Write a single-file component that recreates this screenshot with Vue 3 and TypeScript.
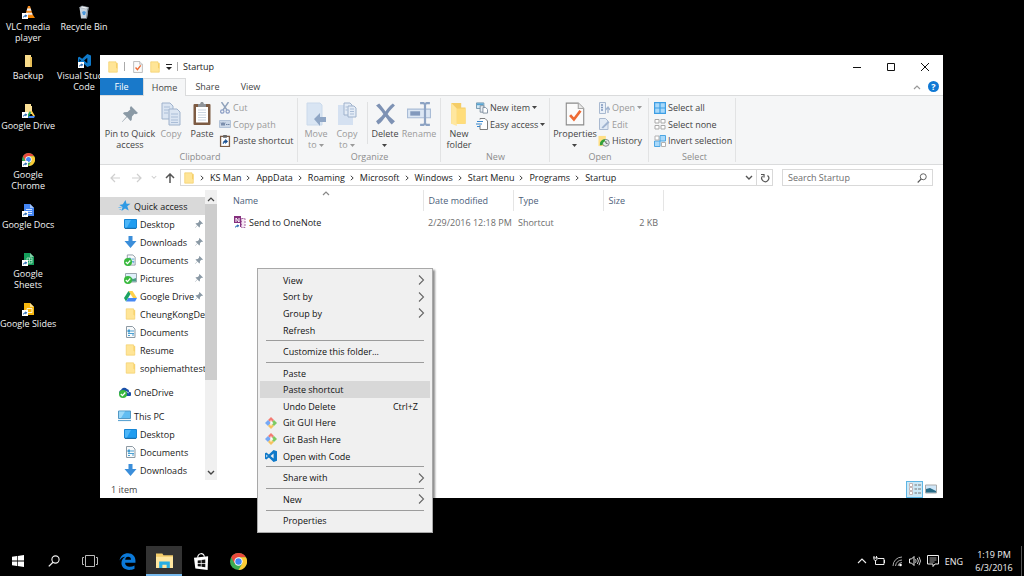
<script setup lang="ts">
interface DesktopIcon { icon: string; label: string[] }
interface NavItem { icon: string; label: string; top?: boolean; pinned?: boolean; gap?: boolean; active?: boolean }
interface MenuItem { label?: string; sep?: boolean; sub?: boolean; key?: string; icon?: string; active?: boolean }

const leftIcons: DesktopIcon[] = [
  { icon: 'vlc', label: ['VLC media', 'player'] },
  { icon: 'backup', label: ['Backup'] },
  { icon: 'gdrive-folder', label: ['Google Drive'] },
  { icon: 'chrome-link', label: ['Google', 'Chrome'] },
  { icon: 'gdocs', label: ['Google Docs'] },
  { icon: 'gsheets', label: ['Google', 'Sheets'] },
  { icon: 'gslides', label: ['Google Slides'] },
]
const rightIcons: DesktopIcon[] = [
  { icon: 'bin', label: ['Recycle Bin'] },
  { icon: 'code-link', label: ['Visual Studio', 'Code'] },
]
const crumbs: string[] = ['KS Man', 'AppData', 'Roaming', 'Microsoft', 'Windows', 'Start Menu', 'Programs', 'Startup']
const nav: NavItem[] = [
  { icon: 'star', label: 'Quick access', top: true, active: true },
  { icon: 'desktop', label: 'Desktop', pinned: true },
  { icon: 'down', label: 'Downloads', pinned: true },
  { icon: 'doc-ok', label: 'Documents', pinned: true },
  { icon: 'pic-ok', label: 'Pictures', pinned: true },
  { icon: 'gdrive', label: 'Google Drive', pinned: true },
  { icon: 'folder', label: 'CheungKongDef' },
  { icon: 'doc', label: 'Documents' },
  { icon: 'folder', label: 'Resume' },
  { icon: 'folder', label: 'sophiemathtest' },
  { icon: 'onedrive', label: 'OneDrive', top: true, gap: true },
  { icon: 'pc', label: 'This PC', top: true, gap: true },
  { icon: 'desktop', label: 'Desktop' },
  { icon: 'doc', label: 'Documents' },
  { icon: 'down', label: 'Downloads' },
]
const menu: MenuItem[] = [
  { label: 'View', sub: true },
  { label: 'Sort by', sub: true },
  { label: 'Group by', sub: true },
  { label: 'Refresh' },
  { sep: true },
  { label: 'Customize this folder...' },
  { sep: true },
  { label: 'Paste' },
  { label: 'Paste shortcut', active: true },
  { label: 'Undo Delete', key: 'Ctrl+Z' },
  { label: 'Git GUI Here', icon: 'git' },
  { label: 'Git Bash Here', icon: 'git' },
  { label: 'Open with Code', icon: 'code' },
  { sep: true },
  { label: 'Share with', sub: true },
  { sep: true },
  { label: 'New', sub: true },
  { sep: true },
  { label: 'Properties' },
]
</script>

<template>
  <div class="screen">
    <svg class="sprite" width="0" height="0" aria-hidden="true">
      <symbol id="folder" viewBox="0 0 12 14"><path d="M1 1h8.5v1.5H11V13H1z" fill="#ffe597" stroke="#f3cf6a" stroke-width=".8" /><path d="M9.5 2.5V8L11 9V2.5z" fill="#f6cf67" /></symbol>
      <symbol id="arrow-badge" viewBox="0 0 6 6"><path d="M0 0h6v6H0z" fill="#fff" /><path d="M1.2 5C1 3 2 2.2 3.4 2.2V1.2L5.3 2.8 3.4 4.4V3.4C2.4 3.4 1.8 4 1.2 5z" fill="#1e62ad" /></symbol>
      <symbol id="vlc" viewBox="0 0 14 14"><path d="M3 10h9l2 3H2z" fill="#f38400" /><path d="M7 1h2l3 10H4z" fill="#f58a1c" /><path d="M6.3 3.5h3.4l.7 2.3H5.6zM5 7.7h6l.6 2H4.4z" fill="#eee" /><use href="#arrow-badge" x="1" y="8" width="6" height="6" /></symbol>
      <symbol id="backup" viewBox="0 0 14 14"><path d="M4 1h6v2h1v10H4z" fill="#f9dc8b" /><path d="M9 3h2v10H9z" fill="#e9bf58" /></symbol>
      <symbol id="gdrive-folder" viewBox="0 0 14 14"><path d="M4 0h6v2h1v8H4z" fill="#fbe096" /><path d="M9 7h2l3 5h-2z" fill="#ffd04b" /><path d="M9 7L6 12l1 2 3-5z" fill="#1ca261" /><path d="M8 12h6l-1 2H7z" fill="#4688f4" /><use href="#arrow-badge" x="1" y="8" width="6" height="6" /></symbol>
      <symbol id="chrome" viewBox="0 0 16 16"><circle cx="8" cy="8" r="8" fill="#3cab54" /><path d="M1.1 4A8 8 0 0 1 15 4H8L4.5 10z" fill="#e8493c" /><path d="M15 4A8 8 0 0 1 8 16l3.5-6L8 4z" fill="#fccb35" /><circle cx="8" cy="8" r="3.9" fill="#fff" /><circle cx="8" cy="8" r="3" fill="#4286f5" /></symbol>
      <symbol id="chrome-link" viewBox="0 0 14 14"><use href="#chrome" x="1" y="0" width="13" height="13" /><use href="#arrow-badge" x="1" y="8" width="6" height="6" /></symbol>
      <symbol id="gdocs" viewBox="0 0 14 14"><path d="M3 1h6l4 4v8H3z" fill="#4486f4" /><path d="M9 1l4 4H9z" fill="#a3c4fb" /><path d="M5 6.5h6M5 8.5h6M7 10.500h4" stroke="#dfeafd" stroke-width=".9" /><use href="#arrow-badge" x="1" y="8" width="6" height="6" /></symbol>
      <symbol id="gsheets" viewBox="0 0 14 14"><path d="M3 1h6l4 4v8H3z" fill="#149e5b" /><path d="M9 1l4 4H9z" fill="#84cda7" /><path d="M6 6h5v5H6zM6 8.500h5M8.500 6v5" fill="none" stroke="#b9e4cc" stroke-width=".8" /><use href="#arrow-badge" x="1" y="8" width="6" height="6" /></symbol>
      <symbol id="gslides" viewBox="0 0 14 14"><path d="M3 1h6l4 4v8H3z" fill="#f7b60c" /><path d="M9 1l4 4H9z" fill="#fde08d" /><path d="M6 6.500h5v4H6z" fill="none" stroke="#fff3cf" /><use href="#arrow-badge" x="1" y="8" width="6" height="6" /></symbol>
      <symbol id="bin" viewBox="0 0 14 14"><path d="M2.500 2.500L4 13.500h6l1.500-11z" fill="#c9d3dc" /><path d="M2.500 2.500L5 1l6.500 1.500L9 4z" fill="#f1f4f7" stroke="#99a6b2" stroke-width=".6" /><path d="M5 7l2-1 2 1-1 3H6z" fill="#4a98dc" /><path d="M10 4l-1 9h1l1.500-10z" fill="#7e8b96" /></symbol>
      <symbol id="code" viewBox="0 0 14 14"><path d="M10 0l4 1.500v11L10 14 4.500 8.800 1.500 11 0 10.200V3.800L1.500 3l3 2.200zM10 4L6.500 7 10 10zM1.500 5.300v3.400L3.200 7z" fill="#0f79c9" fill-rule="evenodd" /></symbol>
      <symbol id="code-link" viewBox="0 0 14 14"><use href="#code" x="1" y="0" width="13" height="13" /><use href="#arrow-badge" x="1" y="8" width="6" height="6" /></symbol>
      <symbol id="prop" viewBox="0 0 18 22"><path d="M1 1h11l5 5v15H1z" fill="#fbfbfb" stroke="#8b8b8b" /><path d="M12 1v5h5" fill="#e8e8e8" stroke="#a5a5a5" /><path d="M4.500 12l3.500 4 6-8" fill="none" stroke="#ee6a33" stroke-width="2.500" /></symbol>
      <symbol id="pin" viewBox="0 0 16 16"><path d="M9 0l7 7-2 1.200-1.500-.5L10 10.500 9.700 14 8.500 15 5 11 .3 16 0 15.700 4.500 10.500 1 7.500 2 6.300l3.500-.2L8.300 3.500 7.800 2z" fill="#8a99a5" /></symbol>
      <symbol id="copy" viewBox="0 0 20 24"><g fill="#dbe5f2" stroke="#9fb2cc"><path d="M1 1h8l3 3v13H1z" /><path d="M8 7h8l3 3v13H8z" /></g><path d="M3 5h6M3 8h5M3 11h4M10 12h7M10 15h7M10 18h7M10 20.500h7" stroke="#aabdd7" /></symbol>
      <symbol id="paste" viewBox="0 0 18 24"><rect x=".5" y="2" width="17" height="21" rx="1" fill="#7d5b43" /><path d="M3 5h12v15.500H3z" fill="#fff" /><path d="M5 8h8M5 10.500h8M5 13h8M5 15.500h8M5 18h8" stroke="#cbd6e2" /><path d="M5 2h2l1-2h2l1 2h2v3H5z" fill="#8f9499" /></symbol>
      <symbol id="cut" viewBox="0 0 10 12"><path d="M1.500 0L7 8M8.500 0L3 8" stroke="#90a2bb" stroke-width="1.400" /><circle cx="2.300" cy="9.500" r="1.700" fill="none" stroke="#8c9ec4" stroke-width="1.200" /><circle cx="7.700" cy="9.500" r="1.700" fill="none" stroke="#8c9ec4" stroke-width="1.200" /></symbol>
      <symbol id="path" viewBox="0 0 12 8"><path d="M.5.5h11v7H.5z" fill="#ccd8e8" stroke="#b3c3d8" /><path d="M2 2.500l1 3 1-3 1 3 1-3M7 4.500h1.500M9 4.500h1.500" fill="none" stroke="#657a9c" stroke-width=".9" /></symbol>
      <symbol id="paste-link" viewBox="0 0 11 13"><rect x=".7" y="1.500" width="9.600" height="11" fill="#fff" stroke="#795a44" stroke-width="1.400" /><path d="M3.500 0h4v3h-4z" fill="#666" /><path d="M3.500 9.500C3.500 7 4.500 6 6 6V4.700L8.500 7 6 9.200V7.800c-1 0-1.500.7-2.500 1.700z" fill="#174f91" stroke="#174f91" stroke-width=".6" /></symbol>
      <symbol id="move" viewBox="0 0 20 24"><path d="M1 1h13l2 2v20H1z" fill="#d9e5f3" stroke="#cbdaeb" /><path d="M8 17l6-6v4h6v5h-6v4z" fill="#8fa6c5" /></symbol>
      <symbol id="copyto" viewBox="0 0 20 24"><path d="M1 3h13l2 2v18H1z" fill="#d5e1f1" /><g fill="#e4ecf6" stroke="#9fb2cc"><path d="M7 1h6l2 2v10H7z" /><path d="M11 4h6l2 2v9h-8z" /></g><path d="M13 7h4M13 9.500h4M13 12h4M8.500 5h2M8.500 8h2" stroke="#aabdd7" /></symbol>
      <symbol id="delete" viewBox="0 0 20 20"><path d="M1 2l3-2c2 2 4 5 6 7.500C12 5 14 2 17 0l2 2c-2 2-5 5-7 8 2 3 5 5 7 7l-3 3c-2-2-4-5-6-7.500C8 15 6 18 3 20l-2-3c2-2 5-4 7-7C6 7 3 4 1 2z" fill="#7e92b4" /></symbol>
      <symbol id="rename" viewBox="0 0 22 22"><path d="M.5 6.500h21v8H.5z" fill="#dce7f4" stroke="#a9bcd6" /><path d="M3 8.500h9v4H3z" fill="#8299bd" /><path d="M12 1h3l1.500 1L18 1h3M12 21h3l1.500-1L18 21h3M16.500 2v18" fill="none" stroke="#8da3c3" stroke-width="2" /></symbol>
      <symbol id="newfolder" viewBox="0 0 16 22"><path d="M1 1h9v4h4v15H1z" fill="#f5cd67" /><path d="M1 1l5 5v16l-5-2z" fill="#ffe79f" /><path d="M6 6h8v14H6z" fill="#ffdd7b" /></symbol>
      <symbol id="newitem" viewBox="0 0 13 12"><path d="M.5.500h8v6h-8z" fill="#d6eaf6" stroke="#6b93ab" /><path d="M1 1h7v2H1z" fill="#55a4d3" /><path d="M4.500 3.500h4v7h-4z" fill="#e9eef3" stroke="#7f8e9e" /><path d="M7.500 5.500h3l2 2v4h-5z" fill="#fff" stroke="#7f8e9e" /></symbol>
      <symbol id="easy" viewBox="0 0 12 12"><path d="M4 1.500V.5h5l2.500 2.500v8.500H4V7" fill="#fff" stroke="#7d7d7d" /><path d="M1 3.500h6M0 6h6M1 8.500h3" stroke="#3886cc" stroke-width="1.200" /></symbol>
      <symbol id="open" viewBox="0 0 12 12"><path d="M1.500.500h6v11h-6z" fill="#eaf0f8" stroke="#a9b9d0" /><path d="M3 3h2M3 5.500h2M3 8h2" stroke="#7f97bd" stroke-width="1.400" /><path d="M10 5v6M7.500 8L10 5l2 3" fill="none" stroke="#a1b4cf" stroke-width="1.300" /></symbol>
      <symbol id="edit" viewBox="0 0 12 12"><path d="M1.500.500h6l2.500 2.500v8.500H1.500z" fill="#e1eaf5" stroke="#a9b9d0" /><path d="M3.500 9.500L10 3l1.500 1.500-6.500 6z" fill="#9fb3d0" /></symbol>
      <symbol id="history" viewBox="0 0 13 12"><path d="M.5.500h8v11h-8z" fill="#ffdf86" /><circle cx="8.500" cy="8" r="3.700" fill="#e7ecec" stroke="#79868d" /><path d="M8.500 6v2.300L10.500 9" fill="none" stroke="#555" /><path d="M2 10C2 6 4 4 8 4L7 7C5.500 7 5 8 5 10l-2 1z" fill="#32a13a" /></symbol>
      <symbol id="selall" viewBox="0 0 12 12"><path d="M0 0h12v12H0z" fill="#3d9ee4" /><path d="M1.200 1.200h4.200v4.200H1.200zM6.600 1.200h4.200v4.200H6.600zM1.200 6.600h4.200v4.200H1.200zM6.600 6.600h4.200v4.200H6.600z" fill="#a9d9fa" /></symbol>
      <symbol id="selnone" viewBox="0 0 12 12"><path d="M1 1.500h4v3.500H1zM7 1.500h4v3.500H7zM1 7.500h4V11H1zM7 7.500h4V11H7z" fill="#fff" stroke="#a9a9a9" /></symbol>
      <symbol id="selinv" viewBox="0 0 12 12"><path d="M6 .5h5.500V6H6zM.5 6H6v5.500H.5z" fill="#a9d9fa" stroke="#4da6e3" /><path d="M1 1h4v4H1zM7.500 7.500h4v4h-4z" fill="#fff" stroke="#b1b1b1" /></symbol>
      <symbol id="star" viewBox="0 0 12 12"><path d="M7 0l1 3.700 4 .1-3.200 2.500 1.400 4.200L6.500 8.500 3 11l1-4L.8 5l3.500-.7z" fill="#2f9ae4" /><path d="M0 7.500h3M1 9.500h2" stroke="#77bdee" /></symbol>
      <symbol id="desktop" viewBox="0 0 13 12"><path d="M.5 1.500h12v8.500H.5z" fill="#1f9cf0" stroke="#1685d4" /><path d="M1 2h6L3 9.500H1z" fill="#4db6f8" /><path d="M1 10h11v1H1z" fill="#1d6fa9" /></symbol>
      <symbol id="down" viewBox="0 0 13 12"><path d="M4.500 0h4v5H12.500l-6 7-6-7h4z" fill="#3b8eda" /></symbol>
      <symbol id="doc" viewBox="0 0 13 12"><path d="M2.500.500h6L11 3v8.500H2.500z" fill="#f8fafb" stroke="#8e9aa4" /><path d="M4 4h2v2H4zM7 5h3M4 7.500h6M4 9.500h2M8 9h2" fill="#3b95cf" stroke="#4b9fd1" /></symbol>
      <symbol id="okay" viewBox="0 0 8 8"><circle cx="4" cy="4" r="4" fill="#39b93e" /><path d="M1.800 4l1.700 1.700L6.300 2.500" fill="none" stroke="#fff" stroke-width="1.200" /></symbol>
      <symbol id="doc-ok" viewBox="0 0 13 12"><use href="#doc" x="1" width="12" height="12" /><use href="#okay" x="0" y="4" width="8" height="8" /></symbol>
      <symbol id="pic-ok" viewBox="0 0 13 12"><path d="M1.500 1.500h11v8.500h-11z" fill="#dff0fb" stroke="#9ba7b0" /><path d="M3 8l3-3 3 2 3-1v3.500H3z" fill="#4a9d84" /><use href="#okay" x="0" y="4" width="8" height="8" /></symbol>
      <symbol id="gdrive" viewBox="0 0 13 12"><path d="M4.500 1h4l4.500 7H9z" fill="#ffd04b" /><path d="M4.500 1L0 8l2 3.500L6.500 4z" fill="#1ca261" /><path d="M4.200 8H13l-2 3.500H2z" fill="#4688f4" /></symbol>
      <symbol id="onedrive" viewBox="0 0 13 12"><path d="M2 9a3 3 0 0 1 1-5 3.500 3.500 0 0 1 6-1 2.500 2.500 0 0 1 2 3 2 2 0 0 1 1 4H7z" fill="#1a50a8" /><path d="M6 10V7.500L8 5.500l3 1.500" fill="none" stroke="#fff" stroke-width=".7" /><use href="#okay" x="1" y="4" width="8" height="8" /></symbol>
      <symbol id="pc" viewBox="0 0 13 12"><path d="M.500 1h12v7.500H.500z" fill="#62bdf2" stroke="#5398c4" /><path d="M1 1.500h6L3 8H1z" fill="#9cd9f9" /><path d="M0 10.500h13" stroke="#5fa5d2" stroke-width="1.200" /></symbol>
      <symbol id="onenote" viewBox="0 0 13 13"><path d="M1 0h7v11H1z" fill="#85307e" /><path d="M8.500 2.500h3.500v9H8.500z" fill="#f6e8f4" stroke="#a765a1" stroke-dasharray="2 1" /><path d="M3 6V2l3 4V2" fill="none" stroke="#fff" /><use href="#arrow-badge" x="1" y="7" width="6" height="6" /></symbol>
      <symbol id="git" viewBox="0 0 12 12"><path d="M6 0l3 3-3 3-3-3z" fill="#f37a72" /><path d="M0 6l3-3 3 3-3 3z" fill="#76a9f5" /><path d="M6 12l3-3-3-3-3 3z" fill="#f6c35f" /><path d="M12 6L9 3 6 6l3 3z" fill="#7dcb62" /><path d="M6 3.500v5M6 5l2 1.500" stroke="#fff" stroke-width="1.300" /></symbol>
      <symbol id="chev" viewBox="0 0 8 12"><path d="M1 1.500L5.500 6 1 10.500" fill="none" stroke="#666" stroke-width="1.100" /></symbol>
      <symbol id="caret-up" viewBox="0 0 8 6"><path d="M1 5l3-3 3 3" fill="none" stroke="currentColor" stroke-width="1.200" /></symbol>
      <symbol id="caret-down" viewBox="0 0 8 6"><path d="M1 1l3 3 3-3" fill="none" stroke="currentColor" stroke-width="1.400" /></symbol>
      <symbol id="tri" viewBox="0 0 5 3"><path d="M0 0h5L2.500 3z" fill="currentColor" /></symbol>
      <symbol id="arrow" viewBox="0 0 10 10"><path d="M5 1L1 5l4 4M1 5h9" fill="none" stroke="currentColor" stroke-width="1.200" /></symbol>
      <symbol id="up" viewBox="0 0 10 10"><path d="M1 5l4-4 4 4M5 1v9" fill="none" stroke="currentColor" stroke-width="1.500" /></symbol>
      <symbol id="refresh" viewBox="0 0 10 10"><path d="M7.500 2.500A3.500 3.500 0 1 1 2.500 3" fill="none" stroke="#555" stroke-width="1.200" /><path d="M1 1.500h3v3" fill="none" stroke="#555" stroke-width="1.200" /></symbol>
      <symbol id="glass" viewBox="0 0 12 12"><circle cx="7.500" cy="4.500" r="3.600" fill="none" stroke="currentColor" stroke-width="1.100" /><path d="M5 7.200L.800 11.400" stroke="currentColor" stroke-width="1.300" /></symbol>
    </svg>

    <main class="desktop">
      <ul class="shortcuts">
        <li v-for="d in leftIcons" :key="d.icon">
          <svg class="i14"><use :href="'#' + d.icon" /></svg>
          <span v-for="l in d.label" :key="l">{{ l }}</span>
        </li>
      </ul>
      <ul class="shortcuts">
        <li v-for="d in rightIcons" :key="d.icon">
          <svg class="i14"><use :href="'#' + d.icon" /></svg>
          <span v-for="l in d.label" :key="l">{{ l }}</span>
        </li>
      </ul>
    </main>

    <section class="window">
      <header class="titlebar">
        <svg class="i12"><use href="#folder" /></svg><i class="bar spaced" />
        <svg class="i12"><use href="#prop" /></svg>
        <svg class="i12"><use href="#folder" /></svg>
        <svg class="qat" viewBox="0 0 6 6"><path d="M0 .5h6" stroke="#222" /><path d="M0 3h6L3 6z" fill="#222" /></svg>
        <i class="bar" />
        <h1>Startup</h1>
        <div class="controls">
          <button aria-label="Minimize"><svg viewBox="0 0 10 10"><path d="M1 5.500h8" stroke="#111" /></svg></button>
          <button aria-label="Maximize"><svg viewBox="0 0 10 10"><path d="M1.500 1.500h7v7h-7z" fill="none" stroke="#111" /></svg></button>
          <button aria-label="Close"><svg viewBox="0 0 10 10"><path d="M1 1l8 8M9 1L1 9" stroke="#111" /></svg></button>
        </div>
      </header>
      <nav class="tabs">
        <button class="file">File</button>
        <button class="on">Home</button>
        <button>Share</button>
        <button>View</button>
        <div class="tabs-end">
          <svg class="i8"><use href="#caret-up" /></svg>
          <button class="help" aria-label="Help">?</button>
        </div>
      </nav>

      <div class="ribbon">
        <div class="group clipboard">
          <div class="tools">
            <button class="big w54"><svg class="pin"><use href="#pin" /></svg><span>Pin to Quick<br>access</span></button>
            <button class="big w28 off"><svg><use href="#copy" /></svg><span>Copy</span></button>
            <button class="big w34"><svg><use href="#paste" /></svg><span>Paste</span></button>
            <div class="small">
              <button class="off"><svg><use href="#cut" /></svg>Cut</button>
              <button class="off"><svg><use href="#path" /></svg>Copy path</button>
              <button><svg><use href="#paste-link" /></svg>Paste shortcut</button>
            </div>
          </div>
          <h2>Clipboard</h2>
        </div>
        <div class="group organize">
          <div class="tools">
            <button class="big w34 off"><svg><use href="#move" /></svg><span>Move<br>to <svg class="tri"><use href="#tri" /></svg></span></button>
            <button class="big w28 off"><svg><use href="#copyto" /></svg><span>Copy<br>to <svg class="tri"><use href="#tri" /></svg></span></button>
            <i class="rule" />
            <button class="big w34"><svg class="cross"><use href="#delete" /></svg><span>Delete<br><svg class="tri"><use href="#tri" /></svg></span></button>
            <button class="big w34 off"><svg><use href="#rename" /></svg><span>Rename</span></button>
          </div>
          <h2>Organize</h2>
        </div>
        <div class="group new">
          <div class="tools">
            <button class="big w34"><svg><use href="#newfolder" /></svg><span>New<br>folder</span></button>
            <div class="small">
              <button><svg><use href="#newitem" /></svg>New item<svg class="tri"><use href="#tri" /></svg></button>
              <button><svg><use href="#easy" /></svg>Easy access<svg class="tri"><use href="#tri" /></svg></button>
            </div>
          </div>
          <h2>New</h2>
        </div>
        <div class="group opening">
          <div class="tools">
            <button class="big w44"><svg><use href="#prop" /></svg><span>Properties<br><svg class="tri"><use href="#tri" /></svg></span></button>
            <div class="small">
              <button class="off"><svg><use href="#open" /></svg>Open<svg class="tri"><use href="#tri" /></svg></button>
              <button class="off"><svg><use href="#edit" /></svg>Edit</button>
              <button><svg><use href="#history" /></svg>History</button>
            </div>
          </div>
          <h2>Open</h2>
        </div>
        <div class="group select">
          <div class="tools">
            <div class="small">
              <button><svg><use href="#selall" /></svg>Select all</button>
              <button><svg><use href="#selnone" /></svg>Select none</button>
              <button><svg><use href="#selinv" /></svg>Invert selection</button>
            </div>
          </div>
          <h2>Select</h2>
        </div>
      </div>

      <div class="address">
        <button class="nav dim" aria-label="Back"><svg class="i10"><use href="#arrow" /></svg></button>
        <button class="nav dim" aria-label="Forward"><svg class="i10 flip"><use href="#arrow" /></svg></button>
        <button class="recent dim" aria-label="Recent"><svg class="i6"><use href="#caret-down" /></svg></button>
        <button class="upbtn" aria-label="Up"><svg class="i10"><use href="#up" /></svg></button>
        <div class="crumbs">
          <svg class="i12"><use href="#folder" /></svg>
          <template v-for="c in crumbs" :key="c">
            <svg class="sepchev" viewBox="0 0 4 6"><path d="M.8.800L3.200 3 .8 5.200" fill="none" stroke="#444" /></svg>
            <a href="#">{{ c }}</a>
          </template>
          <button class="drop" aria-label="History"><svg class="i8"><use href="#caret-down" /></svg></button>
          <button class="reload" aria-label="Refresh"><svg class="i10"><use href="#refresh" /></svg></button>
        </div>
        <div class="search">
          <input type="text" placeholder="Search Startup" aria-label="Search Startup">
          <svg class="i10"><use href="#glass" /></svg>
        </div>
      </div>

      <div class="body">
        <ul class="tree">
          <li v-for="(n, k) in nav" :key="k" :class="{ top: n.top, gap: n.gap, active: n.active }">
            <svg class="ico"><use :href="'#' + n.icon" /></svg>
            <span>{{ n.label }}</span>
            <svg v-if="n.pinned" class="pinned"><use href="#pin" /></svg>
          </li>
        </ul>
        <div class="scroll">
          <svg class="i8"><use href="#caret-up" /></svg>
          <div class="track"><div class="thumb" /></div>
          <svg class="i8"><use href="#caret-down" /></svg>
        </div>
        <div class="files">
          <table>
            <thead>
              <tr>
                <th class="c-name">Name<svg class="sort"><use href="#caret-up" /></svg></th>
                <th class="c-date">Date modified</th>
                <th class="c-type">Type</th>
                <th class="c-size">Size</th>
              </tr>
            </thead>
            <tbody>
              <tr>
                <td class="fname"><svg class="i13"><use href="#onenote" /></svg>Send to OneNote</td>
                <td>2/29/2016 12:18 PM</td>
                <td>Shortcut</td>
                <td class="num">2 KB</td>
              </tr>
            </tbody>
          </table>
        </div>
      </div>
      <footer class="status">
        <span>1 item</span>
        <div class="views">
          <button class="sel" aria-label="Details"><svg viewBox="0 0 12 12"><path d="M.5.500h3v3h-3zM.5 4.500h3v3h-3zM.5 8.500h3v3h-3z" fill="#fff" stroke="#c4b5b5" /><path d="M5.500 2h2.500M9 2h3M5.500 6h2.500M9 6h3M5.500 10h2.500M9 10h3" stroke="#777" /></svg></button>
          <button aria-label="Large icons"><svg viewBox="0 0 12 12"><path d="M.5 2h11v8H.5z" fill="#cfe6f8" stroke="#aaa" /><path d="M1 6l4-1 6 3v1.500H1z" fill="#276a86" /></svg></button>
        </div>
      </footer>
    </section>

    <div class="menu" role="menu">
      <template v-for="(m, k) in menu" :key="k">
        <hr v-if="m.sep">
        <button v-else role="menuitem" :class="{ active: m.active }">
          <span class="gut"><svg v-if="m.icon" class="i12"><use :href="'#' + m.icon" /></svg></span>
          <span>{{ m.label }}</span>
          <kbd v-if="m.key">{{ m.key }}</kbd>
          <svg v-if="m.sub" class="chev"><use href="#chev" /></svg>
        </button>
      </template>
    </div>

    <footer class="taskbar">
      <button aria-label="Start"><svg class="i12" viewBox="0 0 12 12"><path d="M0 1.700l5-.7v4.600H0zM5.700.9L12 0v5.600H5.700zM0 6.400h5V11l-5-.7zM5.700 6.400H12V12l-6.300-.9z" fill="#fff" /></svg></button>
      <button aria-label="Search"><svg class="i12"><use href="#glass" /></svg></button>
      <button aria-label="Task view"><svg class="wide" viewBox="0 0 16 12"><path d="M3.500.500h9v11h-9zM2 2.500H.5v7H2M14 2.500h1.500v7H14" fill="none" stroke="#bbb" /></svg></button>
      <div class="apps">
        <button aria-label="Edge"><svg class="i16" viewBox="0 0 16 16"><path d="M.5 7C1.500 2.500 4.500.300 8.500.300c4.300 0 7 3 7 7v1.900H5.700c0 2.500 2 3.700 4.500 3.700 1.500 0 3-.4 4.400-1.200v3.100c-1.600.8-3.200 1.100-5 1.100C5.200 15.900 2.300 13.300 2.300 9.500c0-2.600 1.500-4.800 3.700-5.900C3.500 3.700 1.700 5 .5 7zM5.800 6.400h5.500c0-1.900-1-2.900-2.700-2.900-1.600 0-2.600 1.100-2.800 2.900z" fill="#0b79d8" fill-rule="evenodd" /></svg></button>
        <button class="on" aria-label="File Explorer"><svg class="i16" viewBox="0 0 16 16"><path d="M0 1.500h6l1 1.500h9v12H0z" fill="#f4cd6a" /><path d="M0 4.500h16V15H0z" fill="#ffe7a0" /><path d="M3 15V9h10v6h-3v-3H6v3z" fill="#28aee4" /></svg></button>
        <button aria-label="Store"><svg class="i16" viewBox="0 0 16 18"><path d="M0 5l15-1.500L14.500 18 1.500 16.500z" fill="#fff" /><path d="M4 5c0-5 6.500-6 7-1" fill="none" stroke="#fff" stroke-width="1.200" /><path d="M4 8l3.300-.4v3H4zM8 7.500l4-.5v3.600H8zM4 11.300h3.300v3L4 14zM8 11.300h4V15l-4-.5z" fill="#111" /></svg></button>
        <button aria-label="Chrome"><svg class="i16"><use href="#chrome" /></svg></button>
      </div>
      <div class="tray">
        <svg class="i10" viewBox="0 0 10 10"><path d="M1 7l4-4 4 4" fill="none" stroke="#eee" stroke-width="1.100" /></svg>
        <svg class="i12" viewBox="0 0 12 12"><path d="M5 3.500h6v6H2.500V7M11.500 5v3" fill="none" stroke="#eee" /><path d="M0 3h5M1 1v2M3.500 1v2M1 3.500c0 3 3 3 3 0M2.500 5v3" fill="none" stroke="#eee" /></svg>
        <svg class="i12" viewBox="0 0 12 12"><path d="M2 11A9 9 0 0 1 11 2M4.500 11A7 7 0 0 1 11 5M7 11a4 4 0 0 1 4-3.500" fill="none" stroke="#aaa" /><circle cx="9.500" cy="10" r="1.300" fill="#fff" /></svg>
        <svg class="i12" viewBox="0 0 12 12"><path d="M.5 4H2.500L5 1.500v9L2.500 8H.5z" fill="none" stroke="#eee" /><path d="M6.500 4.200q1.300 1.800 0 3.600M8.300 3q2.200 3 0 6M10 1.800q3 4.200 0 8.400" fill="none" stroke="#ccc" /></svg>
        <svg class="i12" viewBox="0 0 12 12"><path d="M.5.500h11v8.500H8l-2 2.500V9H.5z" fill="none" stroke="#eee" /><path d="M2.500 3h7M2.500 5h7M2.500 7h5" stroke="#ccc" stroke-width=".8" /></svg>
        <span>ENG</span>
        <time>1:19 PM<br>6/3/2016</time>
        <i class="peek" />
      </div>
    </footer>
  </div>
</template>

<style>
html, body { background: #000; }
</style>

<style scoped>
* { box-sizing: border-box; }
.screen { position: relative; display: flex; flex-direction: column; height: 100vh; overflow: hidden; background: #000; font: 9px/11px "Open Sans", "Noto Sans", sans-serif; color: #1a1a1a; }
.sprite { position: absolute; }
ul { list-style: none; margin: 0; padding: 0; }
button { display: flex; align-items: center; margin: 0; padding: 0; border: 0; background: none; font: inherit; color: inherit; white-space: nowrap; }
svg { display: block; flex: none; }
h1, h2 { margin: 0; font: inherit; }
.i6 { width: 6px; height: 5px; }
.i8 { width: 8px; height: 6px; }
.i10 { width: 10px; height: 10px; }
.i12 { width: 12px; height: 12px; }
.i13 { width: 13px; height: 13px; }
.i14 { width: 14px; height: 14px; }
.i16 { width: 17px; height: 17px; }

.desktop { flex: 1; display: flex; min-height: 0; }
.shortcuts { display: grid; width: 56px; grid-template-rows: repeat(4, 49px 50px); color: #f2f2f2; }
.shortcuts li { display: flex; flex-direction: column; align-items: center; padding-top: 5px; white-space: nowrap; }
.shortcuts svg { margin-bottom: 2px; }

.window { position: absolute; left: 100px; right: 81px; top: 55px; bottom: 78px; display: flex; flex-direction: column; background: #fff; }
.titlebar { display: flex; align-items: center; height: 23px; padding-left: 7px; gap: 5px; }
.bar { width: 1px; height: 9px; background: #aaa; }
.spaced { margin-right: 2px; }
.qat { width: 6px; height: 6px; }
.controls { display: flex; margin-left: auto; padding-right: 1px; }
.controls button { width: 34px; height: 23px; justify-content: center; }
.controls svg { width: 10px; height: 10px; }
.tabs { display: flex; height: 18px; border-bottom: 1px solid #dadbdc; color: #444; }
.tabs > button { width: 43px; justify-content: center; }
.tabs .file { background: #1979ca; color: #fff; }
.tabs .on { height: 18px; background: #f5f6f7; border: 1px solid #dadbdc; border-bottom: 0; }
.tabs-end { display: flex; align-items: center; gap: 7px; margin-left: auto; padding-right: 4px; color: #999; }
.help { width: 11px; height: 11px; border-radius: 50%; justify-content: center; background: #0f78d4; color: #fff; font-weight: 700; }

.ribbon { display: flex; height: 69px; background: #f5f6f7; border-bottom: 1px solid #dadbdc; color: #444; }
.group { display: flex; flex-direction: column; margin: 2px 0; border-right: 1px solid #e2e3e4; }
.group h2 { text-align: center; color: #8c8c8c; }
.tools { display: flex; flex: 1; }
.clipboard { width: 198px; padding-left: 3px; }
.organize { width: 143px; padding-left: 1px; }
.new { width: 109px; padding-left: 1px; }
.opening { width: 99px; padding-left: 2px; }
.select { width: 87px; padding-left: 5px; }
.big { flex-direction: column; align-items: center; justify-content: flex-start; padding-top: 4px; text-align: center; }
.big > svg { width: 24px; height: 24px; margin-bottom: 2px; }
.big span { height: 22px; }
.big .tri { display: inline-block; vertical-align: middle; }
.big > .pin { width: 16px; height: 18px; margin: 3px 0 5px; }
.big > .cross { width: 21px; height: 24px; }
.w54 { width: 54px; }
.w28 { width: 28px; }
.w34 { width: 34px; }
.w44 { width: 46px; }
.tri { width: 5px; height: 3px; }
.rule { width: 1px; height: 42px; margin: 4px 0 0 6px; background: #e0e1e2; }
.off { color: #9a9a9a; }
.small { display: grid; grid-template-rows: 17px 16px 17px; align-content: start; padding-top: 1px; }
.small button { gap: 2px; }
.small button > svg:first-child { width: 12px; height: 12px; }

.address { display: flex; align-items: center; height: 25px; padding: 0 10px 0 4px; }
.nav { width: 22px; justify-content: center; }
.recent { width: 12px; justify-content: center; }
.upbtn { width: 20px; justify-content: center; color: #555; }
.dim { color: #cfcfcf; }
.flip { transform: scaleX(-1); }
.crumbs { flex: 1; display: flex; align-items: center; height: 17px; border: 1px solid #d9d9d9; padding-left: 2px; }
.crumbs a { color: inherit; text-decoration: none; }
.sepchev { width: 4px; height: 6px; margin: 0 6px 0 5px; }
.drop { margin-left: auto; width: 15px; height: 15px; justify-content: center; color: #555; }
.reload { width: 16px; height: 15px; justify-content: center; border-left: 1px solid #d9d9d9; }
.search { display: flex; align-items: center; width: 151px; height: 17px; margin-left: 9px; padding: 0 5px; border: 1px solid #d9d9d9; color: #555; }
.search input { flex: 1; min-width: 0; border: 0; padding: 0; outline: 0; font: inherit; background: none; }
.search input::placeholder { color: #6d6d6d; }

.body { flex: 1; display: flex; min-height: 0; }
.tree { width: 105px; padding-top: 7px; overflow: hidden; }
.tree li { display: flex; align-items: center; height: 18px; padding-left: 24px; gap: 3px; white-space: nowrap; }
.tree li.top { padding-left: 18px; }
.tree li.active { background: #d9d9d9; }
.tree li.gap { margin-top: 6px; }
.tree span { flex: 1; }
.ico { width: 13px; height: 12px; }
.pinned { width: 8px; height: 8px; margin: 0 2px 0 -2px; }
.scroll { display: flex; flex-direction: column; align-items: center; width: 12px; padding: 6px 0 4px; background: #f0f0f0; color: #444; }
.track { flex: 1; align-self: stretch; margin: 2px 0 3px; }
.thumb { height: 67%; background: #cdcdcd; }
.files { flex: 1; padding-left: 10px; }
table { border-collapse: collapse; table-layout: fixed; width: 436px; }
th { position: relative; height: 21px; padding: 0 0 0 5px; font-weight: 400; text-align: left; color: #4c607a; border-right: 1px solid #e5e5e5; }
th.c-name { width: 196px; padding-left: 6px; }
.c-date { width: 90px; }
.c-type { width: 90px; }
.c-size { width: 60px; }
.sort { position: absolute; left: 95px; top: 0; width: 8px; height: 6px; color: #888; }
td { height: 22px; padding: 0 0 0 5px; color: #6d6d6d; white-space: nowrap; }
td.fname { display: flex; align-items: center; gap: 3px; padding-left: 6px; color: #1a1a1a; }
td.num { text-align: right; padding-right: 5px; }
.status { display: flex; align-items: center; height: 18px; padding: 0 4px 0 11px; color: #444; }
.views { display: flex; margin-left: auto; }
.views button { width: 16px; height: 17px; justify-content: center; }
.views .sel { width: 17px; background: #cce8f6; border: 1px solid #5db5e4; }
.views svg { width: 12px; height: 12px; }

.menu { position: absolute; left: 257px; top: 268px; display: flex; flex-direction: column; width: 176px; min-height: 265px; padding: 3px 2px; background: #f0f0f0; border: 1px solid #a8a8a8; box-shadow: 2px 2px 2px rgba(0, 0, 0, .45); color: #111; }
.menu button { flex: 1 0 16px; padding-right: 4px; }
.menu .active { background: #d8d8d8; }
.menu hr { width: 158px; height: 1px; margin: 2px auto; border: 0; background: #9c9c9c; }
.gut { width: 23px; padding-left: 5px; }
.menu kbd { margin-left: auto; padding-right: 8px; font: inherit; }
.chev { width: 8px; height: 12px; margin-left: auto; }

.taskbar { display: flex; height: 30px; color: #f2f2f2; }
.taskbar button { width: 36px; height: 30px; justify-content: center; }
.wide { width: 16px; height: 12px; }
.apps { display: flex; gap: 1px; margin-left: 1px; }
.apps .on { background: #333; border-bottom: 2px solid #76b9ed; }
.tray { display: flex; align-items: center; gap: 6px; margin-left: auto; }
.tray time { width: 42px; margin-left: 4px; text-align: center; line-height: 13px; }
.peek { width: 1px; height: 30px; margin-right: 2px; background: #555; }
</style>
